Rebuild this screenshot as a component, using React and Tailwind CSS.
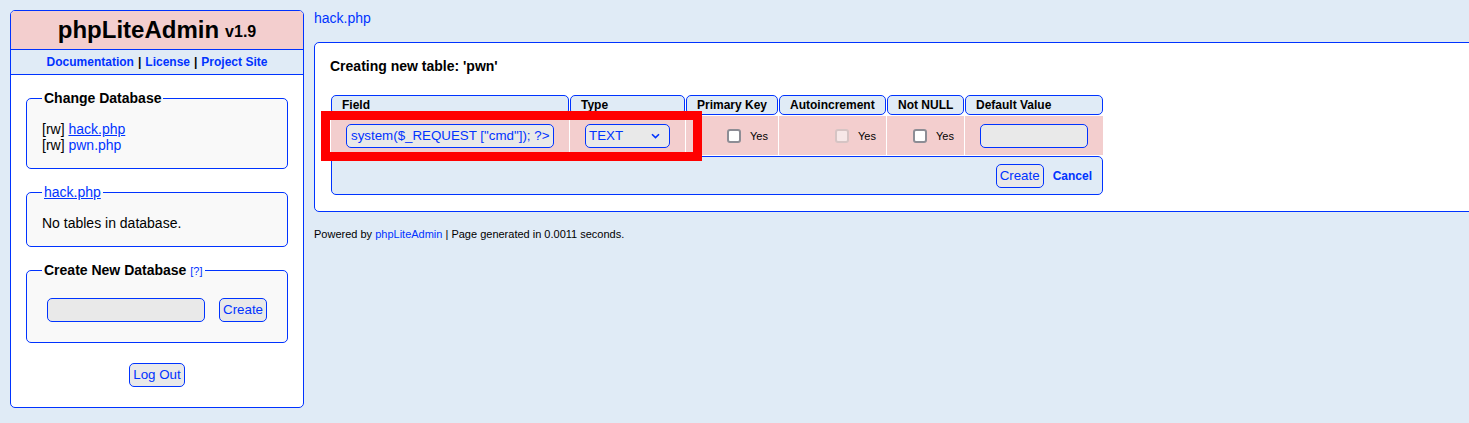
import React from "react";

const BLUE = "border-[#0033ff]";

function Btn({ children }) {
  return (
    <button className="h-[24px] px-[3px] border border-[#0033ff] rounded-[5px] bg-[#e9e9e9] text-[#0033ff] text-[13.333px] leading-[16px]">
      {children}
    </button>
  );
}

function HeadCell({ children }) {
  return (
    <div className="h-[20px] flex items-center px-[10px] border border-[#0033ff] rounded-[5px] bg-[#e0ebf6] text-[12px] font-bold text-black whitespace-nowrap overflow-visible">
      {children}
    </div>
  );
}

function CheckCell({ disabled }) {
  return (
    <div className="bg-[#f3cece] flex items-center justify-end pr-[10px]">
      {disabled ? (
        <span className="block w-[14px] h-[14px] rounded-[3px] border-2 border-[#d6c4c4] bg-[#f7e8e8]" />
      ) : (
        <span className="block w-[14px] h-[14px] rounded-[3px] border-2 border-[#8d8d95] bg-white" />
      )}
      <span className="ml-[9px] text-[11px] text-black">Yes</span>
    </div>
  );
}

export default function App() {
  return (
    <div className="relative w-[1469px] h-[423px] overflow-hidden bg-[#e0ebf6] font-['Liberation_Sans',Arial,sans-serif] text-[14px] leading-[16px] text-black">
      <div className="flex items-start pt-[10px] pl-[10px] gap-[10px]">
        {/* Sidebar */}
        <div className={`w-[294px] shrink-0 border ${BLUE} rounded-[5px] bg-white overflow-hidden`}>
          <div className={`h-[39px] border-b ${BLUE} bg-[#f3cece] flex items-center justify-center`}>
            <span className="text-[24px] leading-[26px] font-bold">phpLiteAdmin</span>
            <span className="ml-[6px] text-[16px] leading-[18px] font-bold mt-[4px]">v1.9</span>
          </div>
          <div className={`h-[25px] border-b ${BLUE} bg-[#e0ebf6] flex items-center justify-center text-[12px] font-bold`}>
            <a className="text-[#0033ff]">Documentation</a>
            <span className="mx-[4px]">|</span>
            <a className="text-[#0033ff]">License</a>
            <span className="mx-[4px]">|</span>
            <a className="text-[#0033ff]">Project Site</a>
          </div>
          <div className="px-[15px] pt-[15px] pb-[20px]">
            <fieldset className={`border ${BLUE} rounded-[5px] bg-[#f9f9f9] px-[15px] pb-[15px] pt-[15px]`}>
              <legend className="px-[2px] font-bold leading-[16px]">Change Database</legend>
              <div>
                [rw] <a className="text-[#0033ff] underline">hack.php</a>
              </div>
              <div>
                [rw] <a className="text-[#0033ff]">pwn.php</a>
              </div>
            </fieldset>
            <fieldset className={`mt-[15px] border ${BLUE} rounded-[5px] bg-[#f9f9f9] px-[15px] pb-[15px] pt-[15px]`}>
              <legend className="px-[2px] leading-[16px]">
                <a className="text-[#0033ff] underline">hack.php</a>
              </legend>
              <div>No tables in database.</div>
            </fieldset>
            <fieldset className={`mt-[15px] border ${BLUE} rounded-[5px] bg-[#f9f9f9] px-[15px] pb-[15px] pt-[15px]`}>
              <legend className="px-[2px] h-[16px] leading-[16px]">
                <span className="font-bold">Create New Database</span>{" "}
                <a className="text-[#0033ff] text-[11px] leading-[11px]">[?]</a>
              </legend>
              <div className="flex items-center mt-[5px] mb-[5px] pl-[5px]">
                <div className="w-[158px] h-[24px] border border-[#0033ff] rounded-[5px] bg-[#e9e9e9]" />
                <div className="ml-[14px] flex">
                  <Btn>Create</Btn>
                </div>
              </div>
            </fieldset>
            <div className="flex justify-center mt-[20px]">
              <Btn>Log Out</Btn>
            </div>
          </div>
        </div>

        {/* Main */}
        <div className="shrink-0">
          <a className="block text-[#0033ff] leading-[16px]">hack.php</a>
          <div className={`mt-[16px] w-[1200px] border ${BLUE} rounded-[5px] bg-white px-[15px] pt-[15px] pb-[16px]`}>
            <div className="font-bold">Creating new table: 'pwn'</div>
            <div className="mt-[21px] ml-px grid grid-cols-[238px_115px_92px_107px_77px_138px] gap-px">
              <HeadCell>Field</HeadCell>
              <HeadCell>Type</HeadCell>
              <HeadCell>Primary Key</HeadCell>
              <HeadCell>Autoincrement</HeadCell>
              <HeadCell>Not NULL</HeadCell>
              <HeadCell>Default Value</HeadCell>

              <div className="h-[39px] bg-[#f3cece] flex items-center px-[15px]">
                <div className="w-full h-[24px] border border-[#0033ff] rounded-[5px] bg-[#e9e9e9] overflow-hidden flex items-center px-[4px] text-[13.333px] text-[#0033ff] whitespace-nowrap">
                  system($_REQUEST ["cmd"]); ?&gt;
                </div>
              </div>
              <div className="bg-[#f3cece] flex items-center px-[15px]">
                <div className="w-full h-[24px] border border-[#0033ff] rounded-[5px] bg-[#e9e9e9] flex items-center justify-between pl-[3px] pr-[9px] text-[13.333px] text-[#0033ff]">
                  <span>TEXT</span>
                  <svg width="9" height="6" viewBox="0 0 9 6" fill="none">
                    <path d="M1 1.2 L4.5 4.6 L8 1.2" stroke="#0033ff" strokeWidth="1.6" />
                  </svg>
                </div>
              </div>
              <CheckCell />
              <CheckCell disabled />
              <CheckCell />
              <div className="bg-[#f3cece] flex items-center px-[15px]">
                <div className="w-full h-[24px] border border-[#0033ff] rounded-[5px] bg-[#e9e9e9]" />
              </div>

              <div className={`col-span-6 h-[39px] border ${BLUE} rounded-[5px] bg-[#e0ebf6] flex items-center justify-end pr-[10px] gap-[9px]`}>
                <Btn>Create</Btn>
                <a className="text-[12px] font-bold text-[#0033ff]">Cancel</a>
              </div>
            </div>
          </div>
          <div className="mt-[16px] text-[11px] leading-[13px]">
            Powered by <a className="text-[#0033ff]">phpLiteAdmin</a> | Page generated in 0.0011 seconds.
          </div>
        </div>
      </div>

      {/* red annotation rectangle */}
      <div className="absolute left-[321px] top-[111px] w-[381px] h-[50px] border-[9px] border-[#ff0000]" />
    </div>
  );
}
